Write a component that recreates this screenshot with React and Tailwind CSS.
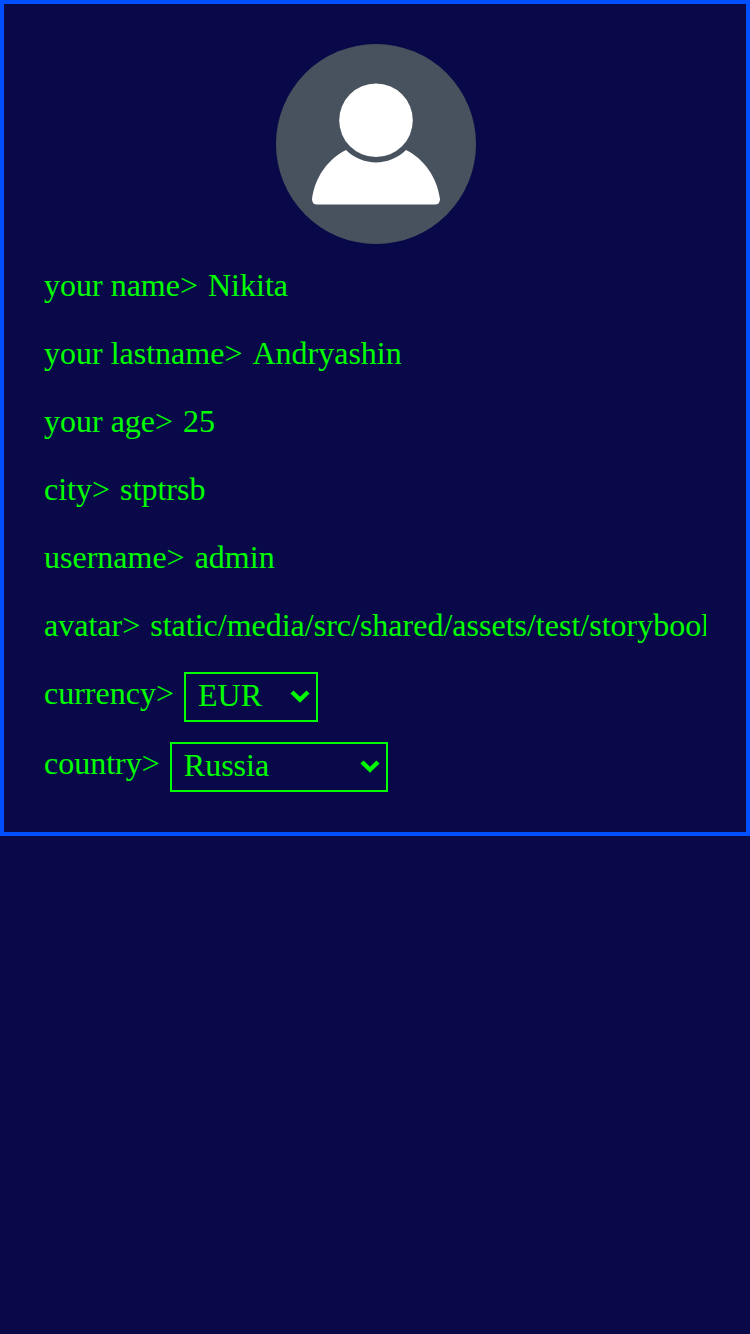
const fields = [
  ["your name>", "Nikita"],
  ["your lastname>", "Andryashin"],
  ["your age>", "25"],
  ["city>", "stptrsb"],
  ["username>", "admin"],
  ["avatar>", "static/media/src/shared/assets/test/storybook.jpg"],
];

function Select({ label, value, className }) {
  return (
    <div className="flex h-[50px] items-start">
      <span className="mr-[10px] mt-[3px]">{label}</span>
      <button
        type="button"
        className={`flex h-[50px] items-start justify-between border-2 border-[#00ff00] pl-3 pr-1.5 pt-[3px] ${className}`}
      >
        <span>{value}</span>
        <svg className="mt-3 h-3.5 w-5" viewBox="0 0 20 14" fill="none" stroke="#00ff00" strokeWidth="4.4">
          <path d="M2 3 L10 10.8 L18 3" />
        </svg>
      </button>
    </div>
  );
}

export default function App() {
  return (
    <main className="min-h-screen bg-[#090949] font-['Liberation_Serif',serif] text-[32px] leading-[36px] text-[#00ff00]">
      <section className="flex h-[836px] flex-col border-4 border-[#0050ff] px-10 pt-10">
        <svg className="ml-[232px] h-[200px] w-[200px] shrink-0" viewBox="0 0 200 200">
          <circle cx="100" cy="100" r="100" fill="#47525e" />
          <circle cx="100" cy="76.3" r="36.8" fill="#fff" />
          <path
            d="M70 106 C87 122.500 113 122.500 130 106 C148 115 161 133 164 155 Q164 160.500 159 160.500 H41 Q36 160.500 36 155 C39 133 52 115 70 106Z"
            fill="#fff"
          />
        </svg>
        <div className="mt-[23px] flex flex-col gap-8">
          {fields.map(([label, value]) => (
            <div key={label} className="flex h-9 overflow-hidden whitespace-nowrap">
              <span className="mr-[10px] shrink-0">{label}</span>
              <span className="min-w-0 overflow-hidden">{value}</span>
            </div>
          ))}
        </div>
        <div className="mt-[29px] flex flex-col gap-5">
          <Select label="currency>" value="EUR" className="w-[134px]" />
          <Select label="country>" value="Russia" className="w-[218px]" />
        </div>
      </section>
    </main>
  );
}
